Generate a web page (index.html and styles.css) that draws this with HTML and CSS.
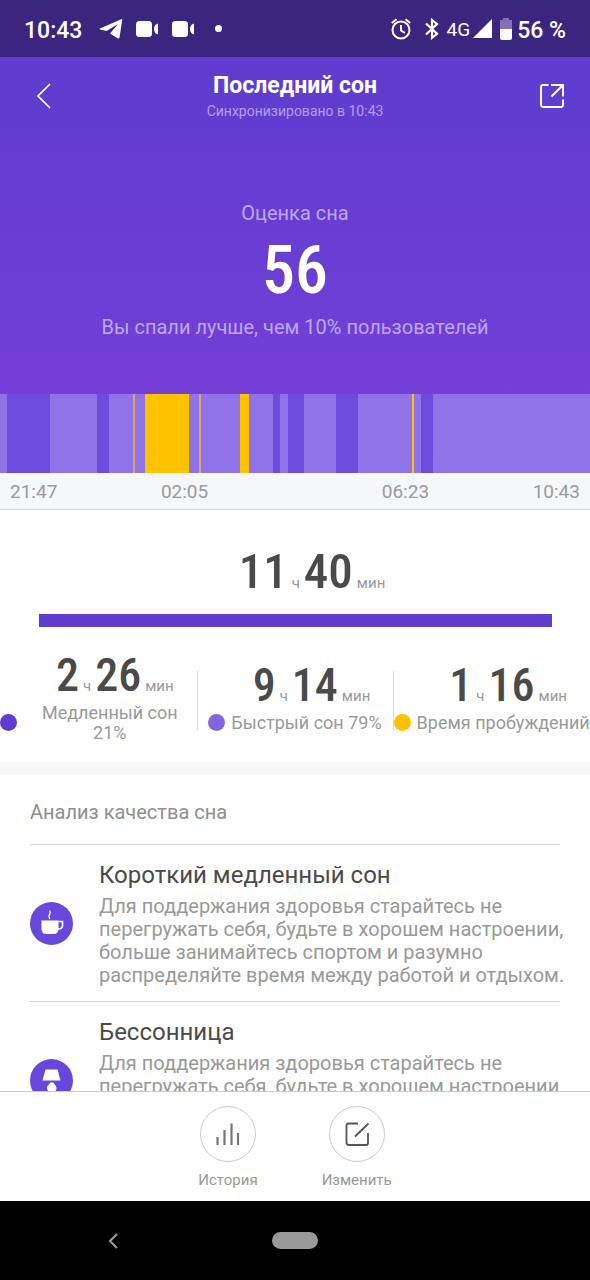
FILE: index.html
```html
<!DOCTYPE html>
<html lang="ru">
<head>
<meta charset="utf-8">
<meta name="viewport" content="width=device-width, initial-scale=1">
<title>Последний сон</title>
<link rel="stylesheet" href="styles.css">
</head>
<body>
<div class="screen">
  <div class="status">
    <time class="clock">10:43</time>
    <svg class="status-telegram" width="24" height="20" viewBox="0 0 24 20" fill="#fff"><path d="M1 9.500 22.200.2c.8-.3 1.200.1 1 .8L20.500 18.600c-.1.9-.9 1.200-1.600.8L11 14.500l8-9.500-11.500 7L1 10.500c-.5-.2-.5-.7 0-1z"/></svg>
    <svg width="23" height="16" viewBox="0 0 23 16" fill="#fff"><rect width="16" height="16" rx="3.500"/><path d="M22 2.500v11c-2.500-.5-4-2.500-4-5.500s1.500-5 4-5.500z"/></svg>
    <svg class="status-camera" width="23" height="16" viewBox="0 0 23 16" fill="#fff"><rect width="16" height="16" rx="3.500"/><path d="M22 2.500v11c-2.500-.5-4-2.500-4-5.500s1.500-5 4-5.500z"/></svg>
    <span class="status-dot"></span>
    <span class="status-right">
      <svg class="status-alarm" width="20" height="22" viewBox="0 0 20 22" fill="none" stroke="#fff" stroke-width="2"><circle cx="10" cy="12" r="8.500"/><path d="M10 7v5.500l4 2.500M.8 5 5.500 1.200M19.200 5 14.500 1.200"/></svg>
      <svg class="status-bluetooth" width="14" height="22" viewBox="0 0 14 22" fill="none" stroke="#fff" stroke-width="2.200"><path d="m1 5.500 11 10.300-5 4V2l5 4L1 16.500"/></svg>
      <span class="network">4G</span>
      <svg width="19" height="19" viewBox="0 0 19 19" fill="#fff"><path d="M19 0v19H0z"/></svg>
      <svg class="status-battery" width="12" height="22" viewBox="0 0 12 22"><path d="M3 0h6v2h3v9H0V2h3z" fill="#8272b5"/><path d="M0 11h12v9q0 2-2 2H2q-2 0-2-2z" fill="#fff"/></svg>
      <span class="battery-level">56 %</span>
    </span>
  </div>

  <header class="hero">
    <div class="bar">
      <button class="icon-button" type="button" aria-label="Назад"><svg width="28" height="28" viewBox="0 0 28 28" fill="none" stroke="#fff" stroke-width="1.700"><path d="M22 2 10 14l12 12"/></svg></button>
      <div class="titles">
        <h1 class="title">Последний сон</h1>
        <p class="sync">Синхронизировано в 10:43</p>
      </div>
      <button class="icon-button" type="button" aria-label="Поделиться"><svg width="28" height="28" viewBox="0 0 28 28" fill="none" stroke="#fff" stroke-width="1.900"><path d="M10.500 3H5Q3 3 3 5v17.500Q3 25 5.500 25H23q2 0 2-2v-5.500M13 3h12v11.500M25 3 13.500 14.500"/></svg></button>
    </div>
    <p class="hero-label">Оценка сна</p>
    <p class="score">56</p>
    <p class="hero-label hero-note">Вы спали лучше, чем 10% пользователей</p>
  </header>

  <div class="chart">
    <span class="light" style="flex-grow:7"></span><span class="deep" style="flex-grow:43"></span><span class="light" style="flex-grow:47"></span><span class="deep" style="flex-grow:12"></span><span class="light" style="flex-grow:24"></span><span class="awake brief" style="flex-grow:2"></span><span class="light" style="flex-grow:10"></span><span class="awake" style="flex-grow:44"></span><span class="light" style="flex-grow:10"></span><span class="awake brief" style="flex-grow:2"></span><span class="light" style="flex-grow:39"></span><span class="awake" style="flex-grow:9"></span><span class="light" style="flex-grow:24"></span><span class="deep" style="flex-grow:7"></span><span class="light" style="flex-grow:8"></span><span class="deep" style="flex-grow:16"></span><span class="light" style="flex-grow:32"></span><span class="deep" style="flex-grow:22"></span><span class="light" style="flex-grow:54"></span><span class="awake" style="flex-grow:2"></span><span class="light" style="flex-grow:7"></span><span class="deep" style="flex-grow:12"></span><span class="light" style="flex-grow:157"></span>
  </div>
  <div class="times"><time>21:47</time><time>02:05</time><time>06:23</time><time>10:43</time></div>

  <main class="content">
    <section class="summary">
      <p class="duration total"><b>11</b><small>ч</small><b>40</b><small>мин</small></p>
      <div class="total-bar"></div>
      <div class="stats">
        <div class="stat">
          <span class="dot dot-deep"></span>
          <div class="stat-text stat-text-narrow"><p class="duration"><b>2</b><small>ч</small><b>26</b><small>мин</small></p><p class="stat-label">Медленный сон 21%</p></div>
        </div>
        <div class="stat">
          <span class="dot dot-light"></span>
          <div class="stat-text"><p class="duration"><b>9</b><small>ч</small><b>14</b><small>мин</small></p><p class="stat-label">Быстрый сон 79%</p></div>
        </div>
        <div class="stat">
          <span class="dot dot-awake"></span>
          <div class="stat-text"><p class="duration"><b>1</b><small>ч</small><b>16</b><small>мин</small></p><p class="stat-label">Время пробуждений</p></div>
        </div>
      </div>
    </section>

    <section class="analysis">
      <h2 class="analysis-title">Анализ качества сна</h2>
      <article class="tip">
        <svg class="tip-icon" width="43" height="43" viewBox="0 0 43 43"><circle cx="21.500" cy="21.500" r="21.500" fill="#6a47dc"/><path d="M11.500 18.500h17v8q0 5.500-5 5.500h-7q-5 0-5-5.500z" fill="#fff"/><path d="M28 19.500h4.500v4q0 3.500-4.500 3.500" fill="none" stroke="#fff" stroke-width="1.700"/><path d="M19.500 8.500c3 3-3 4.500.5 8.500" fill="none" stroke="#fff" stroke-width="1.300"/></svg>
        <div class="tip-text">
          <h3 class="tip-title">Короткий медленный сон</h3>
          <p class="tip-body">Для поддержания здоровья старайтесь не перегружать себя, будьте в хорошем настроении, больше занимайтесь спортом и разумно распределяйте время между работой и отдыхом.</p>
        </div>
      </article>
      <article class="tip">
        <svg class="tip-icon" width="43" height="43" viewBox="0 0 43 43"><circle cx="21.500" cy="21.500" r="21.500" fill="#6a47dc"/><path d="M15.500 10.500h12l3 11h-18z" fill="#fff"/><path d="M20 23.500h3.500c0 2 3 2.500 3 5.500 0 2.500-2 4-3 5h-3.500c-1-1-3-2.500-3-5 0-3 3-3.500 3-5.500z" fill="#fff"/></svg>
        <div class="tip-text">
          <h3 class="tip-title">Бессонница</h3>
          <p class="tip-body">Для поддержания здоровья старайтесь не перегружать себя, будьте в хорошем настроении, больше занимайтесь спортом и разумно распределяйте время между работой и отдыхом.</p>
        </div>
      </article>
    </section>
  </main>

  <div class="actions">
    <button class="action" type="button">
      <span class="action-circle"><svg width="26" height="26" viewBox="0 0 26 26" fill="none" stroke="#777" stroke-width="2.200"><path d="M2.500 24v-8M9.500 24V9M16.500 24V2.500M23 24V12"/></svg></span>
      История
    </button>
    <button class="action" type="button">
      <span class="action-circle"><svg width="26" height="26" viewBox="0 0 26 26" fill="none" stroke="#555" stroke-width="1.800"><path d="M14 2.500H4.500q-2 0-2 2v17q0 2.500 2.500 2.500h17q2 0 2-2V12M24.500 2.500 11 15.500"/></svg></span>
      Изменить
    </button>
  </div>

  <nav class="system-nav">
    <button class="icon-button" type="button" aria-label="Системная кнопка назад"><svg width="12" height="18" viewBox="0 0 12 18" fill="none" stroke="#999" stroke-width="2.200"><path d="M10 2 3 9l7 7"/></svg></button>
    <button class="home-pill" type="button" aria-label="Домой"></button>
  </nav>
</div>
</body>
</html>
```
FILE: styles.css
```css
* {
  box-sizing: border-box;
}

body,
h1,
h2,
h3,
p {
  margin: 0;
}

body {
  background: #fff;
  color: #4a4a4a;
  font-family: Roboto, "Noto Sans", sans-serif;
}

button {
  padding: 0;
  border: 0;
  background: none;
  font: inherit;
  color: inherit;
}

svg {
  display: block;
  flex: none;
}

.screen {
  display: flex;
  flex-direction: column;
  height: 100vh;
}

.screen > * {
  flex: none;
}

/* Status bar */
.status {
  display: flex;
  align-items: center;
  height: 57px;
  padding: 0 24px;
  background: #3c257f;
  color: #fff;
  font-size: 23px;
  font-weight: 500;
}

.clock {
  padding-top: 4px;
}

.status-telegram {
  margin: 0 13px 0 17px;
}

.status-camera {
  margin-left: 13px;
}

.status-dot {
  width: 7px;
  height: 7px;
  margin-left: 20px;
  border-radius: 50%;
  background: #fff;
}

.status-right {
  display: flex;
  align-items: center;
  margin-left: auto;
}

.status-bluetooth {
  margin: 0 8px 0 14px;
}

.network {
  padding: 2px 3px 0 0;
  font-size: 19px;
  font-weight: 400;
}

.status-battery {
  margin: 0 5px 0 8px;
}

.battery-level {
  padding-top: 4px;
}

/* Header with score */
.hero {
  padding-bottom: 55px;
  background: linear-gradient(#613dcf 20%, #743fd7);
  color: #fff;
  text-align: center;
}

.bar {
  display: flex;
  align-items: center;
  justify-content: space-between;
  padding: 14px 24px 0 28px;
}

.titles {
  padding-right: 4px;
}

.title {
  font-size: 23px;
  line-height: 30px;
  font-weight: 700;
}

.sync {
  color: #b19de9;
  font-size: 14px;
  line-height: 20px;
}

.hero-label {
  padding-top: 80px;
  color: #bda8ef;
  font-size: 20px;
  line-height: 24px;
}

.score {
  padding-top: 6px;
  font-family: "Roboto Condensed", Roboto, sans-serif;
  font-size: 66px;
  line-height: 80px;
  font-weight: 500;
}

.hero-note {
  padding-top: 4px;
}

/* Sleep phases */
.chart {
  display: flex;
  height: 79px;
}

.chart span {
  flex-basis: 0;
}

.light {
  background: #9073e9;
}

.deep {
  background: #6c4bdd;
}

.awake {
  background: #ffc200;
}

.brief {
  background: #dda75c;
}

.times {
  display: grid;
  grid-template-columns: 151fr 221fr 151fr 47fr;
  padding: 2px 10px 0;
  border-bottom: 1px solid #d5d8d8;
  background: #f6f7f9;
  color: #999b9e;
  font-size: 19px;
  line-height: 34px;
}

/* Scrollable content */
.screen > .content {
  flex: 1;
  min-height: 0;
  overflow: hidden;
}

.summary {
  padding-top: 34px;
  border-bottom: 13px solid #f7f7f7;
}

.duration {
  display: flex;
  align-items: baseline;
  justify-content: center;
  gap: 4px;
  padding-left: 10px;
  line-height: 56px;
}

.duration b {
  font-family: "Roboto Condensed", Roboto, sans-serif;
  font-size: 46px;
  font-weight: 500;
}

.duration small {
  color: #999;
  font-size: 15px;
  line-height: 20px;
}

.total {
  padding-left: 34px;
}

.total b {
  font-size: 49px;
}

.total-bar {
  height: 13px;
  margin: 14px 38px 0 39px;
  background: #613dcf;
}

.stats {
  display: grid;
  grid-template-columns: repeat(3, 1fr);
  height: 108px;
  margin: 19px 0 8px;
}

.stat {
  display: flex;
  align-items: center;
  justify-content: center;
  gap: 6px;
}

.stat + .stat {
  background: linear-gradient(#d8d8d8, #d8d8d8) left center / 1px 59px no-repeat;
}

.stat-text {
  padding-bottom: 10px;
}

.stat-text-narrow {
  padding-right: 8px;
  padding-left: 8px;
}

.dot {
  flex: none;
  width: 17px;
  height: 17px;
  margin-top: 44px;
  border-radius: 50%;
}

.dot-deep {
  background: #613dcf;
}

.dot-light {
  background: #8565dc;
}

.dot-awake {
  background: #ffc000;
}

.stat-label {
  color: #999;
  font-size: 18px;
  line-height: 20px;
  text-align: center;
}

/* Analysis */
.analysis {
  padding: 0 30px;
}

.analysis-title {
  padding-top: 6px;
  color: #8f8f8f;
  font-size: 20px;
  line-height: 63px;
  font-weight: 400;
}

.tip {
  display: flex;
  align-items: center;
  gap: 26px;
  padding: 14px 0;
  border-top: 1px solid #d4d4d4;
}

.tip-text {
  margin-right: -12px;
}

.tip-title {
  font-size: 24px;
  line-height: 32px;
  font-weight: 400;
}

.tip-body {
  padding-top: 4px;
  color: #999;
  font-size: 20px;
  line-height: 23px;
}

/* Bottom actions */
.actions {
  display: flex;
  justify-content: center;
  gap: 64px;
  height: 110px;
  padding-top: 14px;
  border-top: 1px solid #ccc;
}

.action {
  display: flex;
  flex-direction: column;
  align-items: center;
  gap: 9px;
  color: #999;
  font-size: 15px;
  line-height: 18px;
}

.action-circle {
  display: grid;
  place-items: center;
  width: 56px;
  height: 56px;
  border: 1px solid #ccc;
  border-radius: 50%;
}

.system-nav {
  display: grid;
  grid-template-columns: 1fr 46px 1fr;
  align-items: center;
  height: 79px;
  background: #000;
}

.system-nav .icon-button {
  margin-left: 107px;
}

.home-pill {
  height: 17px;
  border-radius: 9px;
  background: #999;
}
```
